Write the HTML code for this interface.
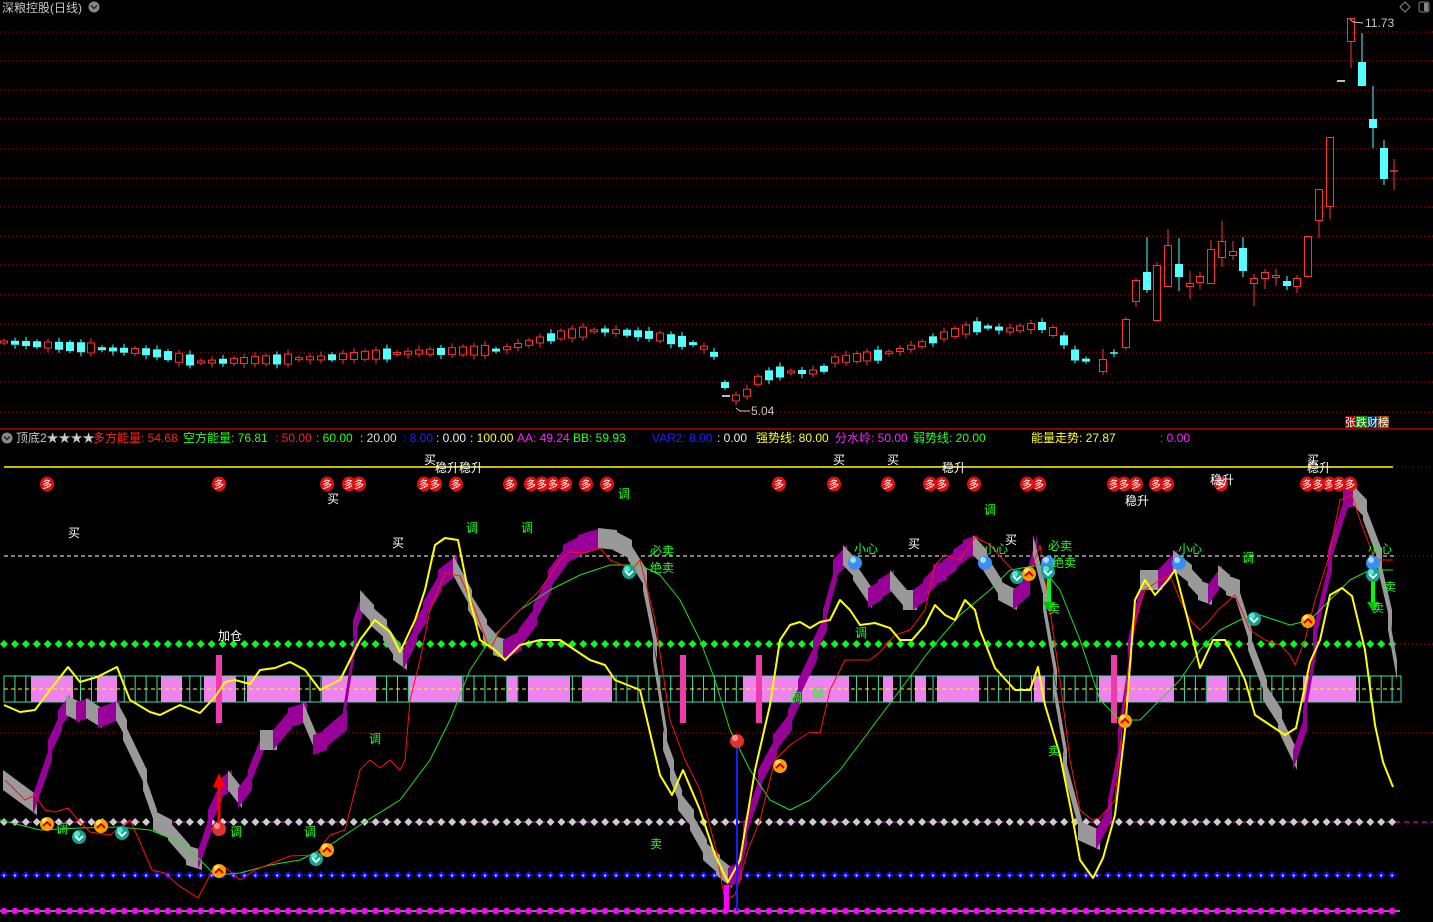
<!DOCTYPE html>
<html><head><meta charset="utf-8">
<style>
html,body{margin:0;padding:0;background:#000;overflow:hidden}
svg{display:block}
text{font-family:"Liberation Sans","Noto Sans CJK SC",sans-serif;font-size:12px}
</style></head>
<body>
<svg id="s" width="1433" height="922" xmlns="http://www.w3.org/2000/svg">
<rect width="1433" height="922" fill="#000"/>
<g id="g"></g>
<text x="2" y="12" fill="#c8c8c8">深粮控股(日线)</text>
<circle cx="94" cy="7" r="5.5" fill="#888"/><path d="M91 5.5 L94 8.5 L97 5.5" stroke="#222" stroke-width="1.5" fill="none"/>
<path d="M1405 2 L1410 7 L1405 12 L1400 7 Z" stroke="#888" fill="none"/>
<rect x="1419" y="2" width="10" height="10" rx="2" stroke="#888" fill="none"/><rect x="1424" y="3" width="4" height="8" fill="#888"/>
<text x="1365" y="27" fill="#c8c8c8">11.73</text>
<path d="M1350 19 L1353 22 L1363 23" stroke="#c8c8c8" fill="none"/>
<text x="751" y="415" fill="#c8c8c8">5.04</text>
<path d="M736 408 L740 411 L750 411" stroke="#c8c8c8" fill="none"/>
<rect x="1345" y="416" width="11" height="12" fill="#900"/><rect x="1356" y="416" width="11" height="12" fill="#080"/><rect x="1367" y="416" width="11" height="12" fill="#036"/><rect x="1378" y="416" width="11" height="12" fill="#840"/>
<text x="1345" y="426" fill="#fff" style="font-size:11px">张跌财榜</text>
<rect x="0" y="428" width="1433" height="2" fill="#8b0000"/>
<circle cx="7" cy="438" r="5.5" fill="#888"/><path d="M4 436.5 L7 439.5 L10 436.5" stroke="#222" stroke-width="1.5" fill="none"/>
<text y="442"><tspan x="16" fill="#c8c8c8">顶底2★★★★</tspan><tspan x="93" fill="#ff2020">多方能量: 54.68</tspan><tspan x="183" fill="#20ff20">空方能量: 76.81</tspan><tspan x="275" fill="#ff2020">: 50.00</tspan><tspan x="316" fill="#20ff20">: 60.00</tspan><tspan x="360" fill="#ddd">: 20.00</tspan><tspan x="403" fill="#2020ff">: 8.00</tspan><tspan x="436" fill="#eee">: 0.00</tspan><tspan x="470" fill="#ffff20">: 100.00</tspan><tspan x="517" fill="#ff20ff">AA: 49.24</tspan><tspan x="573" fill="#20ff20">BB: 59.93</tspan><tspan x="652" fill="#2020ff">VAR2: 8.00</tspan><tspan x="717" fill="#eee">: 0.00</tspan><tspan x="756" fill="#ffff20">强势线: 80.00</tspan><tspan x="835" fill="#ff20ff">分水岭: 50.00</tspan><tspan x="913" fill="#20ff20">弱势线: 20.00</tspan><tspan x="1031" fill="#ffff20">能量走势: 27.87</tspan><tspan x="1160" fill="#ff20ff">: 0.00</tspan></text>
</svg>
<script>
var o='';
function L(x1,y1,x2,y2,c,w,d){o+='<line x1="'+x1+'" y1="'+y1+'" x2="'+x2+'" y2="'+y2+'" stroke="'+c+'" stroke-width="'+(w||1)+'"'+(d?' stroke-dasharray="'+d+'"':'')+'/>';}
function R(x,y,w,h,f,s){o+='<rect x="'+x+'" y="'+y+'" width="'+w+'" height="'+h+'" fill="'+f+'"'+(s?' stroke="'+s+'"':'')+'/>';}
function P(pts,c,w){o+='<polyline points="'+pts.map(function(p){return p.join(',')}).join(' ')+'" fill="none" stroke="'+c+'" stroke-width="'+w+'" stroke-linejoin="round"/>';}
function T(x,y,t,c){o+='<text x="'+x+'" y="'+y+'" fill="'+c+'">'+t+'</text>';}
[32,61,90,119,149,178,207,236,265,295,324,353,382,412].forEach(function(y){L(0,y,1433,y,'#c00000',1,'1,3');});
function interp(a,x){for(var i=0;i<a.length-1;i++){if(x<=a[i+1][0]){var t=(x-a[i][0])/(a[i+1][0]-a[i][0]);return a[i][1]+t*(a[i+1][1]-a[i][1]);}}return a[a.length-1][1];}
var mp=[[4,342],[150,352],[200,362],[320,358],[420,352],[500,350],[560,335],[600,330],[650,335],[700,345],[715,355],[730,400],[745,395],[760,378],[780,372],[820,372],[835,360],[880,355],[920,345],[945,335],[980,326],[1010,330],[1040,325],[1060,335],[1075,355],[1090,362],[1100,360]];
var RC='#ff3232',CC='#54ffff';
function candle(x,o1,c1,h,l,up){var t=Math.min(o1,c1),b=Math.max(o1,c1),col=up?RC:CC;L(x,h,x,t,col);L(x,b,x,l,col);if(b-t<1.5){L(x-4,t,x+4,t,col,1.5);}else if(up){R(x-3.5,t+0.5,7,b-t-1,'none',col);}else R(x-4,t,8,b-t,col);}
for(var i=0;i<100;i++){var x=Math.round(4+i*10.93);if(x>1098)break;var m=interp(mp,x),n=interp(mp,x+11);var up=(n<m)?((i*7)%5!=0):((i*11)%4==0);var bh=3+((i*37)%9);candle(x,up?m+bh/2:m-bh/2,up?m-bh/2:m+bh/2,m-bh/2-2-(i%3),m+bh/2+2+(i*5%3),up);}
[[1103,372,359,349,375,1],[1114,353,353,349,357,0],[1126,348,319,317,350,1],[1136,302,280,278,307,1],[1147,272,290,237,293,0],[1157,321,265,262,321,1],[1168,287,245,229,287,1],[1179,264,277,238,291,0],[1190,287,283,271,299,1],[1200,283,276,272,289,1],[1211,284,249,240,284,1],[1222,258,241,221,267,1],[1233,256,251,241,260,1],[1243,248,271,237,277,0],[1254,284,278,274,306,1],[1265,279,272,269,289,1],[1276,278,275,269,286,1],[1287,281,286,276,290,0],[1297,287,278,275,293,1],[1308,277,236,236,277,1],[1319,221,189,189,238,1],[1330,207,137,137,219,1],[1351,42,18,18,68,1],[1362,62,86,33,86,0],[1373,119,128,86,148,0],[1384,148,179,140,185,0],[1394,171,171,159,190,1]].forEach(function(c){candle(c[0],c[1],c[2],c[3],c[4],c[5]);});
L(1337,81,1345,81,'#fff',1.5);L(722,396,730,396,'#fff',1.5);
L(4,467,1393,467,'#ffff00',1.5);L(1393,467,1433,467,'#c00000',1,'1,3');
L(4,556,1395,556,'#fff',1,'4,3');L(1395,556,1433,556,'#c00000',1,'1,3');
L(0,644,1433,644,'#c00000',1,'1,3');
L(0,733,1433,733,'#c00000',1,'1,3');
L(0,822,1433,822,'#ff00ff',1,'5,4');
L(0,875,1400,875,'#0000ff',1,'2,2');
L(0,911,1400,911,'#fff',1);
for(var k=0;k<128;k++){var x=4+k*10.93;
o+='<path d="M'+x+' 640L'+(x+4)+' 644L'+x+' 648L'+(x-4)+' 644Z" fill="#00ff20"/>';
o+='<path d="M'+x+' 818L'+(x+4)+' 822L'+x+' 826L'+(x-4)+' 822Z" fill="#ccc"/>';
o+='<path d="M'+x+' 871L'+(x+4)+' 875L'+x+' 879L'+(x-4)+' 875Z" fill="#1010ff"/><circle cx="'+x+'" cy="875.5" r="1" fill="#fff"/>';
o+='<circle cx="'+x+'" cy="911" r="3.3" fill="#ff00ff"/>';}
var pinks=[[31,73],[97,117],[161,182],[204,236],[247,300],[322,376],[409,462],[507,517],[528,570],[582,612],[743,849],[883,893],[915,926],[937,979],[1034,1045],[1099,1173],[1207,1227],[1303,1356]];
R(4,676,1397,26,'#000','#40e0b0');
for(var x=4;x<1400;x+=10.93){L(x,676,x,702,'#40e0b0',1);}
pinks.forEach(function(p){R(p[0],676.5,p[1]-p[0],25,'#ee82ee');});
L(4,689,1400,689,'#ffff00',1,'4,3');
[[216,655,723],[680,655,723],[756,655,723],[1111,655,723]].forEach(function(b){R(b[0],b[1],6,b[2]-b[1],'#ee3aaa');});
var red=[[5,780],[25,800],[35,795],[45,810],[55,812],[68,808],[78,820],[90,832],[110,835],[130,820],[140,842],[152,870],[165,873],[178,885],[198,898],[210,875],[225,867],[240,880],[255,870],[275,862],[290,856],[315,855],[330,835],[345,830],[355,790],[360,770],[370,760],[380,768],[390,760],[400,770],[405,760],[410,700],[420,660],[430,610],[445,573],[460,576],[475,610],[490,650],[500,630],[515,615],[540,590],[560,560],[570,552],[585,553],[600,548],[610,560],[620,564],[632,570],[640,560],[655,620],[670,720],[685,760],[700,790],[715,845],[725,900],[735,895],[748,850],[760,820],[775,760],[790,745],[810,732],[820,733],[830,690],[845,660],[870,660],[880,652],[895,635],[910,630],[925,610],[935,565],[945,555],[960,560],[975,537],[990,545],[1005,562],[1018,575],[1030,573],[1040,545],[1045,575],[1050,610],[1060,680],[1070,760],[1080,810],[1092,820],[1100,818],[1115,800],[1125,700],[1135,620],[1145,590],[1160,580],[1170,575],[1180,600],[1190,620],[1200,630],[1210,620],[1218,610],[1235,595],[1250,630],[1265,640],[1280,645],[1290,655],[1295,665],[1305,640],[1315,600],[1328,560],[1340,500],[1352,495],[1360,520],[1375,560],[1393,560]];
var grn=[[0,820],[40,830],[80,828],[120,827],[150,830],[175,840],[190,850],[215,875],[240,873],[270,865],[300,860],[330,845],[360,825],[400,800],[430,760],[450,720],[470,670],[490,640],[520,610],[550,590],[580,575],[610,565],[640,565],[660,575],[680,600],[700,640],[715,680],[730,730],[750,770],[770,800],[790,810],[810,800],[840,770],[870,730],[900,690],[930,650],[960,615],[990,590],[1010,570],[1040,565],[1060,590],[1080,640],[1100,700],[1120,720],[1140,720],[1160,700],[1180,680],[1200,650],[1220,630],[1240,620],[1260,615],[1290,625],[1310,620],[1330,600],[1350,580],[1370,570],[1393,570]];
var rib=[[5,780],[35,805],[50,750],[60,720],[68,705],[78,712],[88,708],[100,718],[118,710],[125,730],[145,780],[155,820],[170,830],[188,855],[200,860],[210,820],[220,790],[230,780],[240,798],[250,780],[262,740],[275,740],[290,718],[305,712],[315,745],[325,740],[345,720],[355,630],[362,600],[372,615],[385,630],[395,650],[405,660],[415,632],[425,612],[440,580],[455,565],[470,600],[485,630],[495,645],[505,650],[520,640],[535,615],[550,580],[565,555],[580,545],[600,538],[615,540],[630,550],[645,580],[655,650],[665,740],[672,770],[680,800],[692,820],[705,850],[718,865],[730,878],[740,870],[745,835],[760,780],[775,745],[790,720],[800,690],[815,650],[825,620],[835,570],[845,555],[855,570],[870,598],[880,590],[892,580],[905,600],[915,600],[925,590],[935,575],[945,570],[955,560],[965,550],[975,545],[985,560],[1000,590],[1015,600],[1028,585],[1035,545],[1045,600],[1055,680],[1065,760],[1080,830],[1098,840],[1110,810],[1120,740],[1130,650],[1142,580],[1160,580],[1175,560],[1190,575],[1200,590],[1210,595],[1220,575],[1228,585],[1238,590],[1250,640],[1265,690],[1280,720],[1295,760],[1305,720],[1315,640],[1330,560],[1345,500],[1355,495],[1365,510],[1380,560],[1390,620],[1395,670]];
for(var i=0;i<rib.length-1;i++){var p=rib[i],q=rib[i+1];var c=q[1]<p[1]?'#990099':'#999';o+='<polygon points="'+(p[0]-2)+','+(p[1]-10)+' '+(q[0]+2)+','+(q[1]-10)+' '+(q[0]+2)+','+(q[1]+10)+' '+(p[0]-2)+','+(p[1]+10)+'" fill="'+c+'"/>';}
P(grn,'#20e020',1);P(red,'#ff1010',1);
var yel=[[4,705],[20,712],[35,710],[50,690],[68,667],[80,682],[97,677],[117,667],[130,700],[150,712],[160,715],[180,705],[200,713],[215,697],[225,682],[235,680],[250,684],[260,670],[275,668],[290,662],[305,670],[320,690],[340,680],[360,640],[375,620],[390,632],[400,652],[415,620],[425,590],[435,545],[445,538],[458,540],[470,600],[480,640],[495,650],[505,660],[520,645],[540,640],[560,640],[575,650],[590,660],[605,665],[615,680],[640,690],[660,775],[672,795],[683,770],[700,810],[715,855],[728,882],[740,860],[755,770],[770,705],[780,640],[790,625],[800,622],[810,628],[820,622],[830,620],[840,600],[850,610],[860,625],[875,623],[890,628],[900,640],[912,640],[925,625],[935,605],[945,615],[955,620],[965,600],[975,610],[980,630],[995,668],[1015,690],[1030,690],[1038,667],[1045,705],[1060,755],[1072,815],[1080,860],[1093,878],[1103,858],[1115,815],[1125,730],[1135,600],[1145,580],[1155,595],[1168,580],[1175,570],[1190,628],[1200,668],[1213,640],[1225,640],[1233,655],[1245,680],[1255,715],[1270,725],[1285,735],[1296,728],[1310,662],[1320,640],[1330,595],[1342,588],[1352,596],[1365,650],[1375,725],[1383,762],[1393,787]];
P(yel,'#ffff00',2);
L(737,741,737,911,'#1020ff',2);R(724,885,5,26,'#ff00ff');
L(219,825,219,785,'#ff0000',3);o+='<path d="M213 787L219 773L225 787Z" fill="#f00"/>';
[1049,1373].forEach(function(x){L(x,560,x,604,'#00ff00',4);o+='<path d="M'+(x-6)+' 602L'+(x+6)+' 602L'+x+' 612Z" fill="#00c000"/>';});
[47,219,327,349,359,424,435,456,510,531,542,553,565,586,607,779,834,888,930,942,974,1027,1039,1114,1124,1136,1156,1167,1221,1307,1318,1329,1339,1350].forEach(function(x){o+='<ellipse cx="'+x+'" cy="484" rx="7" ry="7.5" fill="#e01010"/><text x="'+(x-5)+'" y="488" fill="#fff" style="font-size:10px">多</text>';});
function ball(x,y,c1,c2,ch){o+='<circle cx="'+x+'" cy="'+y+'" r="7" fill="'+c1+'"/><circle cx="'+(x-2)+'" cy="'+(y-3)+'" r="3" fill="'+c2+'" opacity="0.7"/>';if(ch=='u')o+='<path d="M'+(x-4)+' '+(y+2)+'L'+x+' '+(y-2)+'L'+(x+4)+' '+(y+2)+'" stroke="#c00" stroke-width="2" fill="none"/>';if(ch=='d')o+='<path d="M'+(x-4)+' '+(y-1)+'L'+x+' '+(y+3)+'L'+(x+4)+' '+(y-1)+'" stroke="#dff" stroke-width="2" fill="none"/>';}
[[855,563],[985,563],[1048,563],[1179,563],[1373,563]].forEach(function(b){ball(b[0],b[1],'#3a8ef0','#cff');});
[[629,572],[79,837],[122,833],[316,859],[1017,577],[1048,572],[1254,619],[1373,575]].forEach(function(b){ball(b[0],b[1],'#17a090','#7fe','d');});
[[47,824],[101,826],[219,871],[327,850],[780,766],[1029,574],[1125,721],[1308,621]].forEach(function(b){ball(b[0],b[1],'#f5a000','#ff8','u');});
ball(219,829,'#e03030','#fbb');ball(737,741,'#e03030','#fbb');
var W='#fff',G='#20ff20';
[[68,537,'买'],[392,547,'买'],[327,503,'买'],[424,464,'买'],[435,472,'稳升稳升'],[833,464,'买'],[887,464,'买'],[942,472,'稳升'],[908,548,'买'],[1005,544,'买'],[1125,505,'稳升'],[1210,484,'稳升'],[1307,464,'买'],[1307,472,'稳升'],[218,640,'加仓']].forEach(function(t){T(t[0],t[1],t[2],W);});
[[618,498,'调'],[466,532,'调'],[521,532,'调'],[984,514,'调'],[369,743,'调'],[304,836,'调'],[230,836,'调'],[56,833,'调'],[855,637,'调'],[790,702,'调'],[812,697,'调'],[1242,562,'调'],[650,555,'必卖'],[650,572,'绝卖'],[854,553,'小心'],[984,553,'小心'],[1178,553,'小心'],[1368,553,'小心'],[1048,550,'必卖'],[1052,567,'绝卖'],[1048,613,'卖'],[650,848,'卖'],[1048,755,'卖'],[1384,591,'卖'],[1372,612,'卖']].forEach(function(t){T(t[0],t[1],t[2],G);});
document.getElementById('g').innerHTML=o;
</script>
</body></html>
